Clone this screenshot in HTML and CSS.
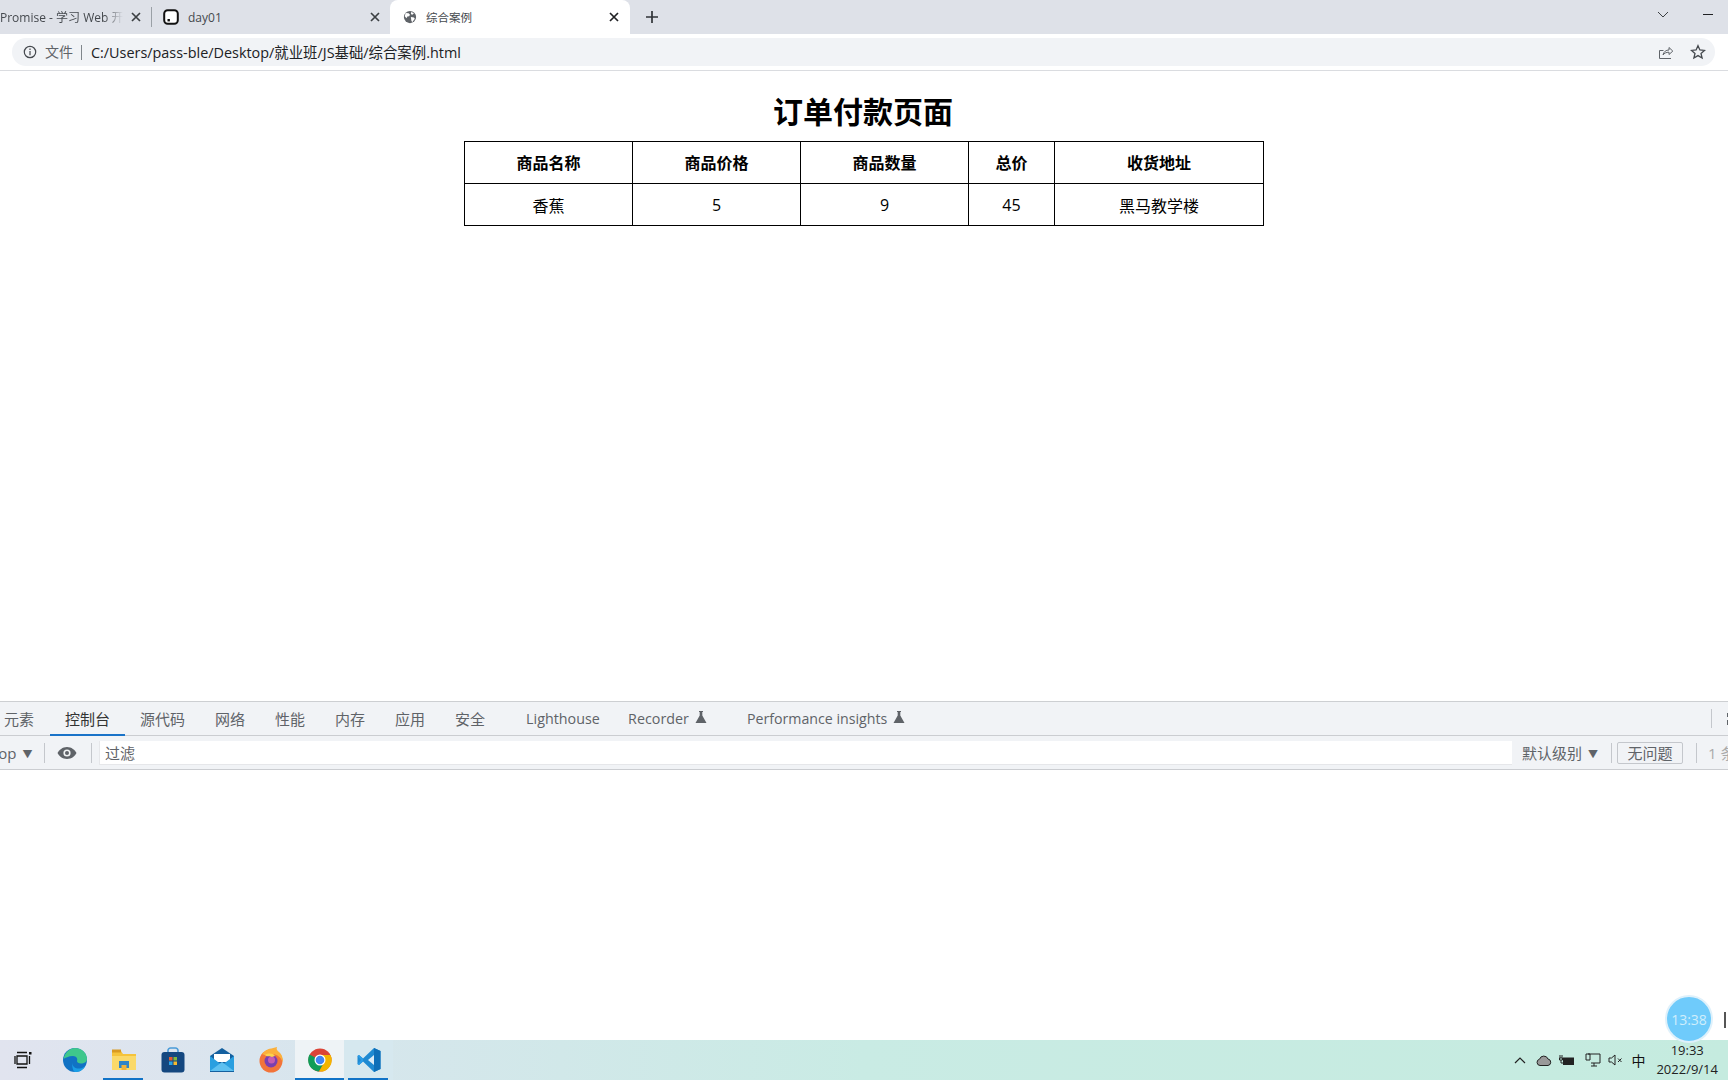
FILE: index.html
```html
<!DOCTYPE html>
<html lang="zh-CN">
<head>
<meta charset="utf-8">
<title>综合案例</title>
<link rel="stylesheet" href="styles.css">
</head>
<body>
<div class="tabstrip">
  <div class="tab tab-first"><span class="tab-title clipped">Promise - 学习 Web 开发</span><svg class="close" viewBox="0 0 10 10"><path d="M1 1l8 8M9 1l-8 8"/></svg></div>
  <div class="tab-sep"></div>
  <div class="tab tab-second">
    <svg class="fav" viewBox="0 0 16 16"><rect x="1.2" y="1.2" width="13.6" height="13.6" rx="3.5" fill="#fff" stroke="#111" stroke-width="2"/><rect x="4.5" y="10" width="2.4" height="2.4" fill="#111"/></svg>
    <span class="tab-title">day01</span><svg class="close" viewBox="0 0 10 10"><path d="M1 1l8 8M9 1l-8 8"/></svg>
  </div>
  <div class="tab tab-active">
    <svg class="fav globe" viewBox="0 0 16 16"><circle cx="8" cy="8" r="7" fill="#5f6368"/><path d="M3 3.5l3.5.2 1.5 1.8-1 1.5-2 .5-1 2-2-2.5zM9.5 2l3 2-2 1.5-1.500-1zM9 8l3.500.5 1 1.500-3 4-1-2z" fill="#fff"/></svg>
    <span class="tab-title small">综合案例</span><svg class="close dark" viewBox="0 0 10 10"><path d="M1 1l8 8M9 1l-8 8"/></svg>
  </div>
  <svg class="plus" viewBox="0 0 12 12"><path d="M6 0v12M0 6h12"/></svg>
  <div class="spacer"></div>
  <svg class="chevron" viewBox="0 0 12 7"><path d="M1 1l5 5 5-5"/></svg>
  <div class="minimize"></div>
</div>
<div class="toolbar">
  <div class="omnibox">
    <svg class="info" viewBox="0 0 14 14"><circle cx="7" cy="7" r="5.700"/><path d="M7 6v4.200M7 3.600v1.300"/></svg>
    <span class="scheme">文件</span>
    <span class="omni-sep"></span>
    <span class="url">C:/Users/pass-ble/Desktop/就业班/JS基础/综合案例.html</span>
    <span class="spacer"></span>
    <svg class="share" viewBox="0 0 16 16"><path d="M1.500 6.500v8h11.500M1.500 6.500h4M5 11c.8-3.500 3-5 6-5V3.500l3.800 3.600-3.800 3.400V8.200c-2.800 0-4.700 1-6 2.800z"/></svg>
    <svg class="star" viewBox="0 0 16 16"><path d="M8 1.700l1.900 4.300 4.600.4-3.500 3 1.100 4.600L8 11.600 3.900 14 5 9.400l-3.500-3 4.600-.4z"/></svg>
  </div>
</div>
<main class="page">
  <h1 class="heading">订单付款页面</h1>
  <table class="orders">
    <colgroup><col class="c1"><col class="c2"><col class="c3"><col class="c4"><col class="c5"></colgroup>
    <tr><th>商品名称</th><th>商品价格</th><th>商品数量</th><th>总价</th><th>收货地址</th></tr>
    <tr><td>香蕉</td><td>5</td><td>9</td><td>45</td><td>黑马教学楼</td></tr>
  </table>
</main>
<section class="devtools">
  <div class="dt-tabs">
    <span class="dt-tab first">元素</span>
    <span class="dt-tab active">控制台</span>
    <span class="dt-tab">源代码</span>
    <span class="dt-tab">网络</span>
    <span class="dt-tab">性能</span>
    <span class="dt-tab">内存</span>
    <span class="dt-tab">应用</span>
    <span class="dt-tab">安全</span>
    <span class="dt-tab lh">Lighthouse</span>
    <span class="dt-tab rec">Recorder<svg class="flask" viewBox="0 0 12 12"><path d="M4 0h4v1H7.300v3.500L11.500 12H.5l4.200-7.500V1H4z"/></svg></span>
    <span class="dt-tab perf">Performance insights<svg class="flask" viewBox="0 0 12 12"><path d="M4 0h4v1H7.300v3.500L11.500 12H.5l4.200-7.500V1H4z"/></svg></span>
    <span class="spacer"></span>
    <span class="dt-vsep"></span>
    <svg class="gear" viewBox="0 0 12 14"><path d="M2 1h6v4H2zM2 8h6v5H2z"/></svg>
  </div>
  <div class="dt-filter">
    <span class="ctx">top <i class="tri">▼</i></span>
    <span class="f-sep s1"></span>
    <svg class="eye" viewBox="0 0 20 14"><path d="M10 1C5.500 1 2 4 .5 7 2 10 5.500 13 10 13s8-3 9.500-6C18 4 14.500 1 10 1z" fill="#5f6368"/><circle cx="10" cy="7" r="3.600" fill="#f1f3f4"/><circle cx="10" cy="7" r="2" fill="#5f6368"/></svg>
    <span class="f-sep s2"></span>
    <div class="filter-input">过滤</div>
    <span class="level">默认级别 <i class="tri">▼</i></span>
    <span class="f-sep s3"></span>
    <span class="issues">无问题</span>
    <span class="f-sep s4"></span>
    <span class="hidden-count">1 条已隐藏</span>
  </div>
  <div class="console"></div>
</section>
<footer class="taskbar">
  <span class="tb-item taskview"><svg viewBox="0 0 18 18" width="18" height="18"><path d="M3 1.500h10M3 16.500h10M3 5h10v8H3zM1 5v8M15.500 5v8" fill="none" stroke="#111" stroke-width="1.300"/><rect x="15" y="1" width="2.500" height="2.500" fill="#111"/></svg></span>
  <span class="tb-item"><svg viewBox="0 0 26 26" width="26" height="26"><circle cx="13" cy="13" r="12" fill="#1172c4"/><path d="M1.500 12C3 5 8 1 13 1c6 0 12 4.500 12 11 0 3-3 4.500-6 4.500-2.500 0-4-1-4-2.500 1-2-.5-5-4-5-4.500 0-8 2-9.500 3z" fill="#3fc78c"/><path d="M10 15c0 5 4 7 8 6.500 2 0 3.500-1 5-2.500-2 5-6.500 6-10 6-1 0-3-3-3-10z" fill="#1a9ee6"/></svg></span>
  <span class="tb-item running"><svg viewBox="0 0 26 24" width="26" height="24"><path d="M1 3h9l2 3h13v16H1z" fill="#f5c33b"/><path d="M1 1.500h9v3H1z" fill="#d99a22"/><path d="M1 8h24v14H1z" fill="#fad96a"/><path d="M8 20v-7h10v7h-3v-3h-4v3z" fill="#2f84c8"/><rect x="10.500" y="17" width="5" height="5" fill="#f0b33a"/></svg></span>
  <span class="tb-item"><svg viewBox="0 0 24 26" width="24" height="26"><path d="M7 6V3.500A2.500 2.500 0 0 1 9.500 1h5A2.500 2.500 0 0 1 17 3.500V6" fill="none" stroke="#4a9bd8" stroke-width="1.600"/><rect x="0.500" y="5" width="23" height="20.500" rx="3" fill="#14477f"/><rect x="8" y="10" width="3.500" height="3.500" fill="#e65a2e"/><rect x="12.500" y="10" width="3.500" height="3.500" fill="#7fba3a"/><rect x="8" y="14.500" width="3.500" height="3.500" fill="#28a3e8"/><rect x="12.500" y="14.500" width="3.500" height="3.500" fill="#f5b92e"/></svg></span>
  <span class="tb-item"><svg viewBox="0 0 26 24" width="26" height="24"><path d="M1 8L13 0l12 8v16H1z" fill="#14609f"/><path d="M5 6h16v8H5z" fill="#fff"/><path d="M1 8l12 9 12-9v15H1z" fill="#2a9fe0"/><path d="M1 23l12-9 12 9z" fill="#5ec0f0"/></svg></span>
  <span class="tb-item"><svg viewBox="0 0 24 26" width="24" height="26"><circle cx="12" cy="14" r="11.500" fill="#f2743a"/><path d="M3 7C8 .5 13 2 18 0c-1 2.500 0 3.500 3 6 3 3 3 8 2.500 9C21 7 13 5.500 8 9z" fill="#fbb03b"/><circle cx="12" cy="14" r="6.500" fill="#7a3fb0"/><circle cx="12.500" cy="13" r="3.500" fill="#c75bb0"/><path d="M6 8c3-2 8-2 10 1l-3 1c-2-1-5 0-7-2z" fill="#fcd34d"/></svg></span>
  <span class="tb-item active-chrome running"><svg viewBox="0 0 24 24" width="24" height="24"><circle cx="12" cy="12" r="11.500" fill="#db4437"/><path d="M12 12L1.500 6.500A11.500 11.500 0 0 0 11 23.500L17 13z" fill="#0f9d58"/><path d="M12 7h10.500A11.500 11.500 0 0 1 11 23.500L17 13z" fill="#f4b400"/><circle cx="12" cy="12" r="5.500" fill="#fff"/><circle cx="12" cy="12" r="4.300" fill="#4285f4"/></svg></span>
  <span class="tb-item vscode running"><svg viewBox="0 0 24 24" width="24" height="24"><path d="M17 0l6.500 3v18L17 24 6 13.500 2 17 .5 16v-8L2 7l4 3.500z" fill="#1f8ad2"/><path d="M17 0l6.500 3v18L17 24z" fill="#0f6fb8"/><path d="M17 7v10l-6-5z" fill="#dcebf6"/><path d="M.5 8L2 7l4 3.500v3L2 17l-1.500-1 3.500-4z" fill="#2a9be6"/></svg></span>
  <span class="spacer"></span>
  <div class="tray">
    <svg class="t-caret" viewBox="0 0 12 7"><path d="M1 6l5-5 5 5"/></svg>
    <svg class="t-cloud" viewBox="0 0 16 11"><path d="M4 10.500a3.200 3.200 0 0 1-.5-6.300A4.500 4.500 0 0 1 12 4a3.300 3.300 0 0 1 0 6.500z" fill="#999" stroke="#222"/></svg>
    <svg class="t-batt" viewBox="0 0 16 11"><rect x="4" y="2.500" width="11" height="7.500" fill="#222"/><path d="M1 0v3M3 0v3M0.500 3h3v2h-3zM2 5v3h2" fill="none" stroke="#222"/></svg>
    <svg class="t-net" viewBox="0 0 16 14"><path d="M3 1h12v9H6M9 10v3M6 13h6M1 1h4v6H1z" fill="none" stroke="#222"/></svg>
    <svg class="t-vol" viewBox="0 0 16 12"><path d="M1 4h2.500L7 1v10L3.500 8H1zM10 4.500l3.500 3.500M13.500 4.500L10 8" fill="none" stroke="#222"/></svg>
    <span class="t-ime">中</span>
    <div class="t-clock"><span>19:33</span><span>2022/9/14</span></div>
  </div>
</footer>
<div class="timer">13:38</div>
<div class="timer-side"></div>
</body>
</html>
```
FILE: styles.css
```css
* { box-sizing: border-box; }
html, body { margin: 0; height: 100%; }
body {
  width: 1728px; height: 1080px; overflow: hidden; position: relative;
  display: flex; flex-direction: column; background: #fff; color: #000;
  font-family: "Open Sans", "Noto Sans CJK SC", sans-serif;
}
.spacer { flex: 1; }
.tabstrip { height: 34px; background: #dee1e8; display: flex; align-items: center; font-size: 12px; color: #45494e; flex: none; }
.tab { display: flex; align-items: center; height: 34px; }
.tab-first { width: 151px; flex: none; }
.tab-title { white-space: nowrap; overflow: hidden; flex: 1; }
.clipped { -webkit-mask-image: linear-gradient(90deg, #000 85%, transparent 100%); mask-image: linear-gradient(90deg, #000 85%, transparent 100%); }
.close { width: 10px; height: 10px; fill: none; stroke: #3c4043; stroke-width: 1.700; flex: none; margin-left: 8px; }
.tab-first .close { margin-right: 10px; }
.tab-sep { width: 1px; height: 20px; background: #9aa0a6; margin-right: 11px; flex: none; }
.tab-second { width: 227px; flex: none; }
.fav { width: 16px; height: 16px; flex: none; margin-right: 9px; }
.tab-second .close { margin-right: 10px; }
.tab-active { width: 240px; flex: none; background: #fff; border-radius: 8px 8px 0 0; padding-left: 13px; }
.globe { width: 14px; height: 14px; margin-right: 9px; }
.tab-active .close { margin-right: 11px; stroke: #202124; }
.small { font-size: 11.500px; }
.plus { width: 12px; height: 12px; fill: none; stroke: #303337; stroke-width: 1.700; margin-left: 16px; flex: none; }
.chevron { width: 12px; height: 7px; fill: none; stroke: #3c4043; stroke-width: 1; margin: -6px 34px 0 0; flex: none; }
.minimize { width: 10px; height: 1px; background: #202124; margin: -6px 15px 0 0; flex: none; }
.toolbar { height: 37px; background: #fff; border-bottom: 1px solid #dadce0; padding: 4px 13px 4px 12px; flex: none; }
.omnibox { height: 28px; border-radius: 14px; background: #f1f3f6; display: flex; align-items: center; padding: 0 9px 0 11px; }
.info { width: 14px; height: 14px; fill: none; stroke: #45494e; stroke-width: 1.200; flex: none; }
.scheme { font-size: 14px; color: #5f6368; margin: -2px 0 0 8px; }
.omni-sep { width: 1px; height: 15px; background: #80868b; margin: 0 9px 0 8px; }
.url { font-size: 14.400px; color: #202124; white-space: nowrap; margin-top: -2px; }
.share { width: 16px; height: 16px; fill: none; stroke: #5f6368; stroke-width: 1; flex: none; }
.star { width: 16px; height: 16px; fill: none; stroke: #45494e; stroke-width: 1.300; margin-left: 16px; flex: none; }
.page { flex: 1; min-height: 0; padding-top: 17px; display: flex; flex-direction: column; align-items: center; }
.heading { margin: 0 0 8px -2px; font-size: 30px; line-height: 45px; font-weight: 700; font-family: "Noto Sans CJK SC", sans-serif; height: 45px; }
.orders { width: 799px; border-collapse: collapse; table-layout: fixed; font-size: 16px; font-family: "Open Sans", "Noto Sans CJK SC", sans-serif; }
.c1, .c2, .c3 { width: 168px; }
.c4 { width: 86px; }
.c5 { width: 209px; }
.orders th, .orders td { border: 1px solid #000; height: 42px; padding: 0; text-align: center; }
.orders th { padding-bottom: 2px; }
.devtools { height: 339px; flex: none; display: flex; flex-direction: column; border-top: 1px solid #cdcfd2; }
.dt-tabs { height: 34px; background: #f1f3f6; border-bottom: 1px solid #cbcdd1; display: flex; align-items: stretch; font-size: 15px; color: #5f6368; flex: none; }
.dt-tab { display: flex; align-items: center; padding: 0 15px; white-space: nowrap; }
.dt-tab.first { padding: 0 15px 0 4px; width: 50px; }
.dt-tab.active { color: #333; border-bottom: 2px solid #1a73c8; margin-bottom: -1px; }
.dt-tab.lh { margin-left: 11px; font-size: 14.300px; padding: 0 15px; width: 102px; }
.dt-tab.rec { padding: 0 0 0 15px; font-size: 14.300px; margin-right: 40px; }
.dt-tab.perf { padding: 0; font-size: 14.200px; }
.flask { width: 12px; height: 12px; fill: #5f6368; margin-left: 6px; margin-top: -3px; }
.dt-vsep { width: 1px; height: 19px; background: #c4c7cc; align-self: center; }
.gear { width: 12px; height: 14px; fill: #5f6368; align-self: center; margin: 0 -9px 0 13px; flex: none; }
.dt-filter { height: 34px; background: #f1f3f6; border-bottom: 1px solid #cbcdd1; display: flex; align-items: center; font-size: 15px; color: #5f6368; flex: none; white-space: nowrap; overflow: hidden; }
.ctx { margin-left: -7px; width: 51px; color: #5f6368; flex: none; }
.tri { font-style: normal; font-size: 10px; margin-left: 2px; position: relative; top: -1px; }
.f-sep { width: 1px; height: 20px; background: #c4c7cc; flex: none; }
.eye { width: 20px; height: 14px; margin: 0 13px 0 12px; flex: none; }
.s2 { margin: 0 7px 0 1px; }
.filter-input { width: 1413px; height: 24px; background: #fff; border: 1px solid #e6e7ea; border-width: 0 0 1px 1px; padding-left: 5px; line-height: 24px; color: #5f6368; flex: none; }
.level { margin-left: 10px; width: 80px; flex: none; }
.s3 { margin-left: 9px; }
.issues { margin-left: 5px; width: 66px; height: 22px; border: 1px solid #c4c7cc; border-radius: 2px; text-align: center; line-height: 20px; flex: none; }
.s4 { margin-left: 13px; }
.hidden-count { margin-left: 11px; color: #aaa; flex: none; }
.console { flex: 1; background: #fff; }
.taskbar { height: 40px; flex: none; display: flex; align-items: center; background: linear-gradient(90deg, #e1e4ef 0%, #d9e5ee 15%, #c9ebe4 50%, #c5ebdf 100%); }
.tb-item { width: 49px; height: 40px; display: flex; align-items: center; justify-content: center; position: relative; flex: none; }
.taskview { width: 46px; margin-right: 4px; }
.running::after { content: ""; position: absolute; left: 4px; right: 5px; bottom: 0; height: 2px; background: #1173c7; }
.active-chrome { background: #eef3f6; }
.active-chrome::after { left: 0; right: 0; }
.vscode { background: #d6e8ef; }
.tray { display: flex; align-items: center; margin-right: 10px; height: 40px; }
.tray svg { flex: none; }
.t-caret { width: 12px; height: 7px; fill: none; stroke: #222; stroke-width: 1.200; }
.t-cloud { width: 16px; height: 11px; margin-left: 10px; }
.t-batt { width: 16px; height: 11px; margin-left: 7px; }
.t-net { width: 16px; height: 14px; margin-left: 10px; }
.t-vol { width: 16px; height: 12px; margin-left: 7px; }
.t-ime { font-size: 14px; margin-left: 7px; color: #111; }
.t-clock { display: flex; flex-direction: column; align-items: center; font-size: 13px; line-height: 19px; color: #222; margin-left: 11px; }
.timer { position: absolute; left: 1665px; top: 995px; width: 48px; height: 48px; border-radius: 50%; background: #6fcbfb; border: 2px solid #dff1fb; color: #cfeefc; font-size: 14px; display: flex; align-items: center; justify-content: center; }
.timer-side { position: absolute; left: 1724px; top: 1012px; width: 2px; height: 16px; background: #555; }
```
